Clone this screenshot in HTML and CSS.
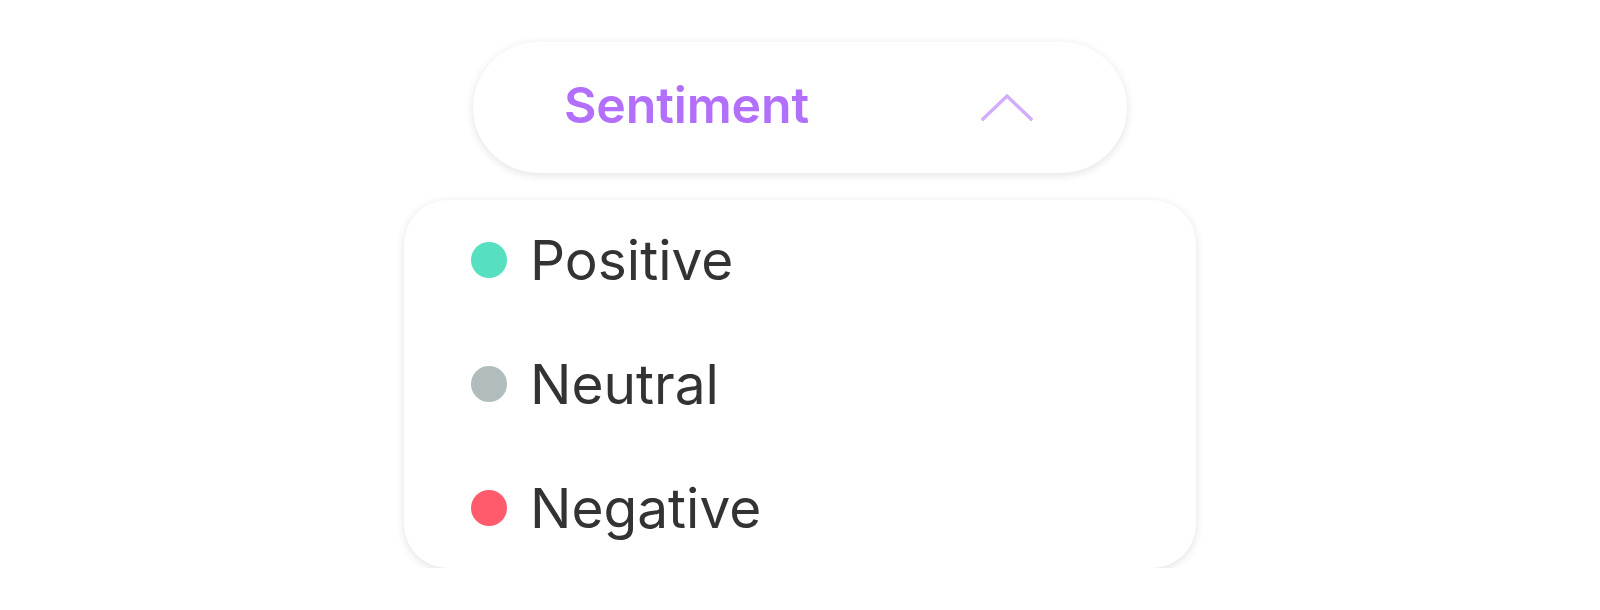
FILE: index.html
```html
<!DOCTYPE html>
<html lang="en">
<head>
    <meta charset="UTF-8">
    <meta name="viewport" content="width=device-width, initial-scale=1.0">
    <title>Sentiment filter</title>
    <link rel="stylesheet" href="styles.css">
</head>
<body>
    <div class="filter">
        <button class="filter-toggle" type="button">
            <span class="filter-label">Sentiment</span>
            <svg class="chevron" width="52" height="28" viewBox="0 0 52 28" fill="none">
                <path d="M2 26 L26 3 L50 26" stroke="#d3acfb" stroke-width="3.4" stroke-linecap="square" stroke-linejoin="miter"/>
            </svg>
        </button>

        <ul class="filter-menu">
            <li class="filter-option"><span class="dot dot-positive"></span>Positive</li>
            <li class="filter-option"><span class="dot dot-neutral"></span>Neutral</li>
            <li class="filter-option"><span class="dot dot-negative"></span>Negative</li>
        </ul>
    </div>
</body>
</html>
```

FILE: styles.css
```css
body {
    font-family: 'Inter', 'Noto Sans', sans-serif;
    background: #ffffff;
    margin: 0;
    padding: 42px 0 0;
    display: flex;
    flex-direction: column;
    align-items: center;
}
.filter {
    display: flex;
    flex-direction: column;
    align-items: center;
    gap: 27px;
}
.filter-toggle {
    width: 654px;
    height: 131px;
    border: none;
    border-radius: 66px;
    background: #ffffff;
    box-shadow: 0 2px 8px rgba(40, 50, 60, 0.14);
    display: flex;
    align-items: center;
    justify-content: space-between;
    padding: 0 94px 6px 91px;
    box-sizing: border-box;
    cursor: pointer;
    font-family: inherit;
}
.filter-label {
    font-size: 50px;
    font-weight: 600;
    color: #b16ffb;
    letter-spacing: -0.15px;
}
.chevron {
    display: block;
    margin-top: 4px;
}
.filter-menu {
    list-style: none;
    margin: 0;
    padding: 0 0 0 67px;
    width: 792px;
    height: 368px;
    box-sizing: border-box;
    background: #ffffff;
    border-radius: 44px;
    box-shadow: 0 2px 8px rgba(40, 50, 60, 0.14);
    display: flex;
    flex-direction: column;
    gap: 4px;
}
.filter-option {
    height: 120px;
    display: flex;
    align-items: center;
    gap: 23px;
    font-size: 55px;
    color: #333333;
}
.dot {
    width: 36px;
    height: 36px;
    border-radius: 50%;
    flex-shrink: 0;
}
.dot-positive {
    background: #56dfc0;
}
.dot-neutral {
    background: #b1bcbd;
}
.dot-negative {
    background: #ff5b6d;
}
```
